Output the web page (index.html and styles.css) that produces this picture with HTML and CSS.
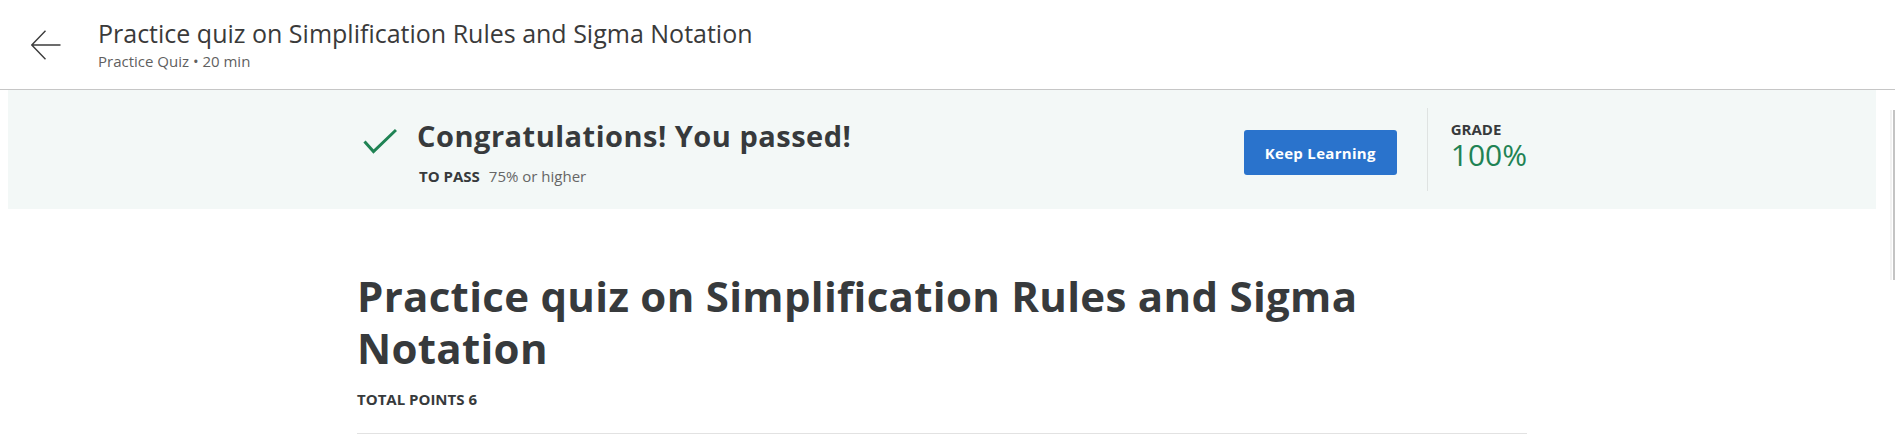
FILE: index.html
```html
<!DOCTYPE html>
<html lang="en">
<head>
<meta charset="utf-8">
<title>Practice quiz on Simplification Rules and Sigma Notation</title>
<link rel="stylesheet" href="styles.css">
</head>
<body>
<header class="topbar">
  <a class="back" href="#" aria-label="Back">
    <svg width="30" height="30" viewBox="0 0 30 30" aria-hidden="true">
      <path d="M14.5 0.8 L0.8 15 L14.5 29.2 M0.8 15 H29.5" fill="none" stroke="#3c3c3c" stroke-width="1.4"/>
    </svg>
  </a>
  <div class="topbar-text">
    <div class="topbar-title">Practice quiz on Simplification Rules and Sigma Notation</div>
    <div class="topbar-sub">Practice Quiz • 20 min</div>
  </div>
</header>
<div class="body-row">
  <main class="main">
    <section class="banner">
      <div class="banner-inner">
        <div class="result">
          <svg class="check" width="40" height="26" viewBox="0 0 40 26" aria-hidden="true">
            <path d="M7.5 13.5 L16.5 23.5 L39 2" fill="none" stroke="#1f8354" stroke-width="3"/>
          </svg>
          <div class="result-text">
            <div class="result-title">Congratulations! You passed!</div>
            <div class="result-sub"><span class="label">TO PASS</span><span class="value">75% or higher</span></div>
          </div>
        </div>
        <div class="actions">
          <button class="btn-primary" type="button">Keep Learning</button>
          <div class="divider"></div>
          <div class="grade">
            <div class="grade-label">GRADE</div>
            <div class="grade-value">100%</div>
          </div>
        </div>
      </div>
    </section>
    <div class="content">
      <h1 class="quiz-title">Practice quiz on Simplification Rules and Sigma Notation</h1>
      <div class="total-points">TOTAL POINTS 6</div>
      <hr class="rule">
    </div>
  </main>
  <div class="scrollbar"><div class="thumb"></div></div>
</div>
</body>
</html>
```
FILE: styles.css
```css
* { box-sizing: border-box; }
html, body { margin: 0; padding: 0; background: #fff; }
body {
  font-family: "Open Sans", "Noto Sans", sans-serif;
  color: #373a3c;
  overflow: hidden;
}

.topbar {
  display: flex;
  align-items: center;
  height: 90px;
  padding-left: 31px;
  border-bottom: 1px solid #c6c6c6;
}
.back { display: flex; width: 30px; height: 30px; }
.topbar-text { margin-left: 37px; }
.topbar-title {
  font-size: 25px;
  line-height: 30px;
  color: #3a3a3a;
}
.topbar-sub {
  margin-top: 3px;
  font-size: 15px;
  line-height: 20px;
  color: #5f5f5f;
}

.body-row { display: flex; }
.main { flex: 1; min-width: 0; }

.banner {
  margin: 0 8px;
  height: 119px;
  background: #f3f8f7;
}
.banner-inner {
  width: 1170px;
  height: 100%;
  margin: 0 auto;
  display: flex;
  align-items: center;
  justify-content: space-between;
}
.result { display: flex; align-items: flex-start; margin-top: 4px; }
.check { margin-top: 10px; flex: none; }
.result-text { margin-left: 20px; }
.result-title {
  font-size: 29px;
  line-height: 36px;
  font-weight: 700;
  letter-spacing: 0.5px;
  color: #373a3c;
}
.result-sub {
  margin: 12px 0 0 2px;
  font-size: 15px;
  line-height: 20px;
}
.result-sub .label { font-weight: 700; color: #373a3c; margin-right: 9px; }
.result-sub .value { color: #666; }

.actions { display: flex; align-items: center; align-self: stretch; }
.btn-primary {
  height: 45px;
  padding: 0 21px;
  margin-top: 6px;
  border: 0;
  border-radius: 3px;
  background: #2a73cc;
  color: #fff;
  font-family: inherit;
  font-size: 15px;
  font-weight: 700;
  letter-spacing: 0.3px;
}
.divider {
  align-self: stretch;
  width: 1px;
  margin: 18px 0 18px 30px;
  background: #dfe3e2;
}
.grade { padding-left: 23px; margin-bottom: 9px; }
.grade-label {
  font-size: 15px;
  line-height: 20px;
  font-weight: 700;
  color: #373a3c;
}
.grade-value {
  font-size: 30px;
  line-height: 32px;
  font-weight: 400;
  color: #1f8354;
}

.content { width: 1170px; margin: 0 auto; }
.quiz-title {
  margin: 61px 0 0;
  font-size: 42px;
  line-height: 52px;
  font-weight: 700;
  letter-spacing: 0.3px;
  color: #373a3c;
}
.total-points {
  margin-top: 15px;
  font-size: 15px;
  line-height: 20px;
  font-weight: 700;
  color: #373a3c;
}
.rule {
  margin: 24px 0 0;
  border: 0;
  border-top: 1px solid #e2e2e2;
}

.scrollbar {
  width: 11px;
  flex: none;
  display: flex;
  justify-content: flex-end;
  padding-top: 20px;
  height: 347px;
}
.thumb {
  width: 2px;
  height: 170px;
  background: #c4c4c4;
  box-shadow: -3px 0 0 #f2f2f2;
}
```
